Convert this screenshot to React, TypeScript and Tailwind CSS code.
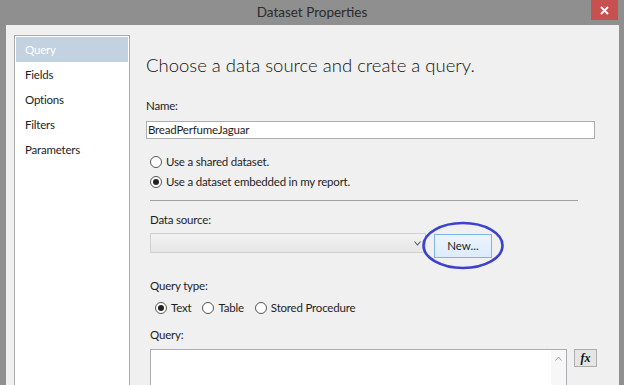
import React from 'react';

const font = { fontFamily: 'Lato, "Noto Sans", sans-serif' };

const Radio = ({ checked, label, className = '' }: { checked?: boolean; label: string; className?: string }) => (
  <div className={`flex items-center h-4 ${className}`}>
    <span className="w-[12px] h-[12px] rounded-full border border-[#555] bg-white flex items-center justify-center">
      {checked && <span className="w-[6px] h-[6px] rounded-full bg-[#222]" />}
    </span>
    <span className="ml-[4px] text-[11.5px] tracking-[-0.2px] text-[#1e1e1e]">{label}</span>
  </div>
);

const navItems = ['Query', 'Fields', 'Options', 'Filters', 'Parameters'];

export default function App() {
  return (
    <div className="w-[624px] h-[385px] bg-[#8f8f8f] overflow-hidden flex flex-col" style={font}>
      {/* title bar */}
      <div className="h-[25px] relative flex items-center justify-center shrink-0">
        <span className="text-[13.5px] text-[#2a2a2a]">Dataset Properties</span>
        <div className="absolute right-[6px] top-0 w-[27px] h-[20px] bg-[#c75050] flex items-center justify-center">
          <svg width="9" height="9" viewBox="0 0 9 9">
            <path d="M1 1 L8 8 M8 1 L1 8" stroke="white" strokeWidth="1.8" />
          </svg>
        </div>
      </div>

      <div className="flex-1 ml-[6px] mr-[5px] bg-[#f0f0f0] flex pt-[10px] pl-[8px] min-h-0">
        {/* left nav */}
        <div className="w-[116px] bg-white border border-[#a9a9a9] border-b-0 p-[1px] shrink-0">
          {navItems.map((item, i) => (
            <div
              key={item}
              className={`h-[25px] flex items-center pl-[9px] text-[11.5px] tracking-[-0.2px] ${i === 0 ? 'bg-[#c3d2e0] text-white' : 'text-[#1e1e1e]'}`}
            >
              {item}
            </div>
          ))}
        </div>

        {/* main */}
        <div className="flex-1 pl-[16px] pt-[16px] flex flex-col min-w-0">
          <h1 className="text-[18.5px] leading-[28px] font-light text-[#111]">Choose a data source and create a query.</h1>

          <div className="mt-[19px] text-[11.5px] tracking-[-0.2px] leading-[16px] text-[#1e1e1e]">Name:</div>
          <div className="mt-[7px] w-[449px] h-[18px] bg-white border border-[#abadb3] flex items-center px-[1px] text-[11.5px] tracking-[-0.2px] text-[#1e1e1e]">
            BreadPerfumeJaguar
          </div>

          <div className="pl-[4px]">
            <Radio label="Use a shared dataset." className="mt-[15px]" />
            <Radio checked label="Use a dataset embedded in my report." className="mt-[4px]" />

            <div className="mt-[10px] w-[428px] h-px bg-[#a0a0a0]" />

            <div className="mt-[11px] text-[11.5px] tracking-[-0.2px] leading-[16px] text-[#1e1e1e]">Data source:</div>
            <div className="mt-[5px] flex items-start">
              <div className="w-[276px] h-[20px] border border-[#d0d0d0] bg-gradient-to-b from-[#f2f2f2] to-[#e6e6e6] flex items-center justify-end pr-[4px]">
                <svg width="7" height="5" viewBox="0 0 7 5">
                  <path d="M0.5 0.5 L3.5 4 L6.5 0.5" stroke="#555" strokeWidth="1.1" fill="none" />
                </svg>
              </div>
              <div className="relative ml-[8px] mt-[1px]">
                <div className="w-[58px] h-[24px] border border-[#7eb4ea] bg-gradient-to-b from-[#ecf4fc] to-[#dcecfc] flex items-center justify-center text-[11.5px] text-[#1e1e1e]">
                  New...
                </div>
                <svg className="absolute left-[-12px] top-[-13px] pointer-events-none" width="84" height="50" viewBox="0 0 84 50">
                  <ellipse cx="41" cy="24.5" rx="39.5" ry="22.5" fill="none" stroke="#3b42cc" strokeWidth="2.6" />
                </svg>
              </div>
            </div>

            <div className="mt-[20px] text-[11.5px] tracking-[-0.2px] leading-[16px] text-[#1e1e1e]">Query type:</div>
            <div className="mt-[6px] flex items-center pl-[5px]">
              <Radio checked label="Text" />
              <Radio label="Table" className="ml-[11px]" />
              <Radio label="Stored Procedure" className="ml-[11px]" />
            </div>

            <div className="mt-[11px] text-[11.5px] tracking-[-0.2px] leading-[16px] text-[#1e1e1e]">Query:</div>
            <div className="mt-[6px] flex items-start flex-1">
              <div className="w-[417px] h-[60px] bg-white border border-[#abadb3] flex justify-end">
                <div className="w-[15px] h-full bg-[#f7f7f7] flex justify-center pt-[6px]">
                  <svg width="7" height="5" viewBox="0 0 7 5">
                    <path d="M0.5 4.5 L3.5 1 L6.5 4.5" stroke="#a0a0a0" strokeWidth="1" fill="none" />
                  </svg>
                </div>
              </div>
              <div className="ml-[7px] w-[23px] h-[18px] border border-[#adadad] bg-[#e5e5e5] flex items-center justify-center">
                <span className="text-[12px] font-bold italic text-[#111]" style={{ fontFamily: '"Liberation Serif", serif' }}>
                  fx
                </span>
              </div>
            </div>
          </div>
        </div>
      </div>
    </div>
  );
}
